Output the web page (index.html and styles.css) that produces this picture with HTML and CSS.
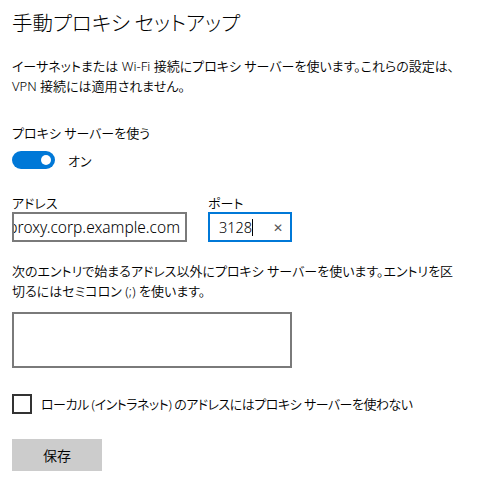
FILE: index.html
```html
<!DOCTYPE html>
<html lang="ja">
<head>
<meta charset="utf-8">
<link rel="stylesheet" href="styles.css">
</head>
<body>
<div class="page">
  <h1 class="title">手動プロキシ セットアップ</h1>
  <p class="desc">イーサネットまたは Wi-Fi 接続にプロキシ サーバーを使います。これらの設定は、<br>VPN 接続には適用されません。</p>
  <div class="label use-label">プロキシ サーバーを使う</div>
  <div class="toggle-row">
    <span class="toggle"><span class="knob"></span></span>
    <span class="toggle-text">オン</span>
  </div>
  <div class="fields">
    <div class="field">
      <div class="label">アドレス</div>
      <div class="input addr"><span class="addr-text">proxy.corp.example.com</span></div>
    </div>
    <div class="field">
      <div class="label">ポート</div>
      <div class="input port"><span class="port-text">3128<span class="caret"></span></span><span class="clear">✕</span></div>
    </div>
  </div>
  <p class="desc desc2">次のエントリで始まるアドレス以外にプロキシ サーバーを使います。エントリを区<br>切るにはセミコロン (;) を使います。</p>
  <div class="textarea"></div>
  <div class="check-row">
    <span class="checkbox"></span>
    <span class="check-text">ローカル (イントラネット) のアドレスにはプロキシ サーバーを使わない</span>
  </div>
  <button class="save">保存</button>
</div>
</body>
</html>
```

FILE: styles.css
```css
html, body {
  margin: 0;
  padding: 0;
  background: #ffffff;
}
.page {
  padding: 8px 12px 0 12px;
  font-family: "Noto Sans", "Noto Sans CJK JP", sans-serif;
  color: #000;
  font-size: 13px;
  font-weight: 350;
  font-feature-settings: "palt";
}
.title {
  margin: 0;
  font-size: 20.5px;
  font-weight: 300;
  line-height: 28px;
  font-family: "Noto Sans CJK JP", sans-serif;
}
.desc {
  margin: 20px 0 0 0;
  line-height: 20px;
  white-space: nowrap;
}
.label {
  line-height: 20px;
}
.use-label {
  margin-top: 27px;
}
.toggle-row {
  display: flex;
  align-items: center;
  gap: 13px;
  margin-top: 7px;
  height: 20px;
}
.toggle {
  width: 43px;
  height: 18px;
  border-radius: 10px;
  background: #0078d7;
  display: flex;
  align-items: center;
  justify-content: flex-end;
  padding-right: 4px;
  box-sizing: border-box;
}
.knob {
  width: 10px;
  height: 10px;
  border-radius: 50%;
  background: #fff;
}
.fields {
  display: flex;
  gap: 21px;
  margin-top: 25px;
}
.field .label {
  line-height: 16px;
}
.input {
  box-sizing: border-box;
  height: 30px;
  margin-top: 1px;
  border: 2px solid #7a7a7a;
  display: flex;
  align-items: center;
  overflow: hidden;
  white-space: nowrap;
  font-size: 14.5px;
}
.addr {
  width: 175px;
  justify-content: flex-end;
  padding-right: 5px;
  font-size: 15.5px;
}
.port {
  width: 84px;
  border-color: #0078d7;
  padding-left: 9px;
  justify-content: space-between;
  padding-right: 7px;
}
.port-text {
  display: flex;
  align-items: center;
}
.caret {
  display: inline-block;
  width: 1px;
  height: 17px;
  background: #000;
}
.clear {
  font-size: 12px;
  color: #555;
}
.desc2 {
  margin-top: 19px;
}
.textarea {
  box-sizing: border-box;
  width: 280px;
  height: 56px;
  border: 2px solid #7a7a7a;
  margin-top: 11px;
}
.check-row {
  display: flex;
  align-items: center;
  gap: 9px;
  margin-top: 26px;
}
.checkbox {
  box-sizing: border-box;
  width: 20px;
  height: 20px;
  border: 2px solid #333;
}
.check-text {
  line-height: 20px;
  letter-spacing: -0.5px;
}
.save {
  display: block;
  margin-top: 25px;
  width: 90px;
  height: 32px;
  border: none;
  background: #cccccc;
  font-family: "Noto Sans CJK JP", sans-serif;
  font-weight: 350;
  font-size: 14px;
  color: #000;
  padding: 0;
}
```
